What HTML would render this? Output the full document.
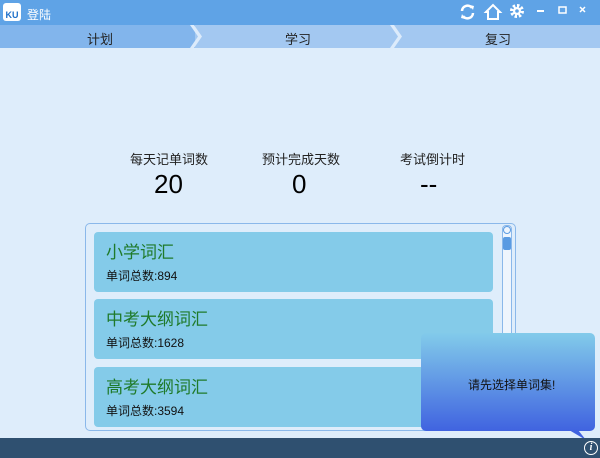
<!DOCTYPE html>
<html><head><meta charset="utf-8"><style>
*{margin:0;padding:0;box-sizing:border-box}
body{width:600px;height:458px;overflow:hidden;background:#deedfb;font-family:"Liberation Sans","Noto Sans CJK SC",sans-serif;position:relative}
.t{position:absolute;left:0;top:0;width:600px;height:25px;background:#5fa3e6}
.nav{position:absolute;left:0;top:25px;width:600px;height:23px;background:#a3c8f1}
.c{position:absolute;font-size:13px;color:#222}
.card{position:absolute;left:94px;width:399px;height:60px;background:#84cbe9;border-radius:4px}
.card .a{position:absolute;left:12px;top:6px;font-size:17px;color:#1f7a2a}
.card .b{position:absolute;left:12px;top:35px;font-size:12px;color:#111}
</style></head><body>
<div class="t"></div>
<div style="position:absolute;left:3px;top:3px;width:18px;height:18px;background:#fff;border-radius:3px;font-size:9px;font-weight:bold;color:#1d6fc9;text-align:center;line-height:24px">KU</div>
<div style="position:absolute;left:27px;top:6px;font-size:12px;color:#fff">登陆</div>
<svg style="position:absolute;left:458px;top:2px" width="142" height="20" viewBox="0 0 142 20">
<g fill="none" stroke="#fff" stroke-width="2.5"><path d="M4 9a5.5 5.5 0 0 1 10-3M15 11a5.5 5.5 0 0 1-10 3"/></g>
<path d="M12 3l4 1-1 4zM7 17l-4-1 1-4z" fill="#fff"/>
<path d="M28 10l7-7 7 7h-2v7h-10v-7z" fill="none" stroke="#fff" stroke-width="2"/>
<circle cx="59" cy="9" r="5" fill="none" stroke="#fff" stroke-width="4" stroke-dasharray="2.2 1.7"/><circle cx="59" cy="9" r="4" fill="#fff"/><circle cx="59" cy="9" r="1.8" fill="#5fa3e6"/>
<rect x="79" y="8" width="7" height="2" fill="#fff"/>
<rect x="101" y="5" width="7" height="6" fill="none" stroke="#fff" stroke-width="1.5"/>
<path d="M122 5l5 5M127 5l-5 5" stroke="#fff" stroke-width="1.5"/>
</svg>
<div class="nav"></div>
<div style="position:absolute;left:0;top:25px;width:195px;height:23px;background:#82b5ec"></div>
<svg style="position:absolute;left:190px;top:25px" width="220" height="23"><path d="M0 0h4l8 11.5-8 11.5h-4l8-11.5z" fill="#dcebfb"/><path d="M200 0h4l8 11.5-8 11.5h-4l8-11.5z" fill="#dcebfb"/></svg>
<div class="c" style="left:87px;top:29px">计划</div>
<div class="c" style="left:285px;top:29px">学习</div>
<div class="c" style="left:485px;top:29px">复习</div>
<div class="c" style="left:130px;top:149px">每天记单词数</div>
<div class="c" style="left:262px;top:149px">预计完成天数</div>
<div class="c" style="left:400px;top:149px">考试倒计时</div>
<div style="position:absolute;left:154px;top:169px;font-size:26px">20</div>
<div style="position:absolute;left:292px;top:169px;font-size:26px">0</div>
<div style="position:absolute;left:420px;top:169px;font-size:26px">--</div>
<div style="position:absolute;left:85px;top:223px;width:431px;height:208px;border:1px solid #8ab8ea;border-radius:5px"></div>
<div class="card" style="top:232px"><div class="a">小学词汇</div><div class="b">单词总数:894</div></div>
<div class="card" style="top:299px"><div class="a">中考大纲词汇</div><div class="b">单词总数:1628</div></div>
<div class="card" style="top:367px"><div class="a">高考大纲词汇</div><div class="b">单词总数:3594</div></div>
<div style="position:absolute;left:502px;top:225px;width:10px;height:204px;border:1px solid #8ab8ea;border-radius:4px;background:#eef5fd"></div>
<div style="position:absolute;left:503px;top:237px;width:8px;height:13px;background:#5a9be2;border-radius:2px"></div>
<div style="position:absolute;left:503px;top:226px;width:8px;height:8px;border:1px solid #5a9be2;border-radius:50%"></div>
<div style="position:absolute;left:421px;top:333px;width:174px;height:98px;border-radius:5px;background:linear-gradient(#82cbea,#4063e0)"></div>
<svg style="position:absolute;left:565px;top:430px" width="25" height="12"><path d="M4 0h9l8 10z" fill="#4063e0"/></svg>
<div class="c" style="left:468px;top:376px;font-size:12px;color:#111">请先选择单词集!</div>
<div style="position:absolute;left:0;top:438px;width:600px;height:20px;background:#2f5070"></div>
<div style="position:absolute;left:584px;top:441px;width:14px;height:14px;border:1.5px solid #fff;border-radius:50%;color:#fff;font-size:10px;font-style:italic;font-weight:bold;text-align:center;line-height:11px;font-family:'Liberation Serif',serif">i</div>
</body></html>
